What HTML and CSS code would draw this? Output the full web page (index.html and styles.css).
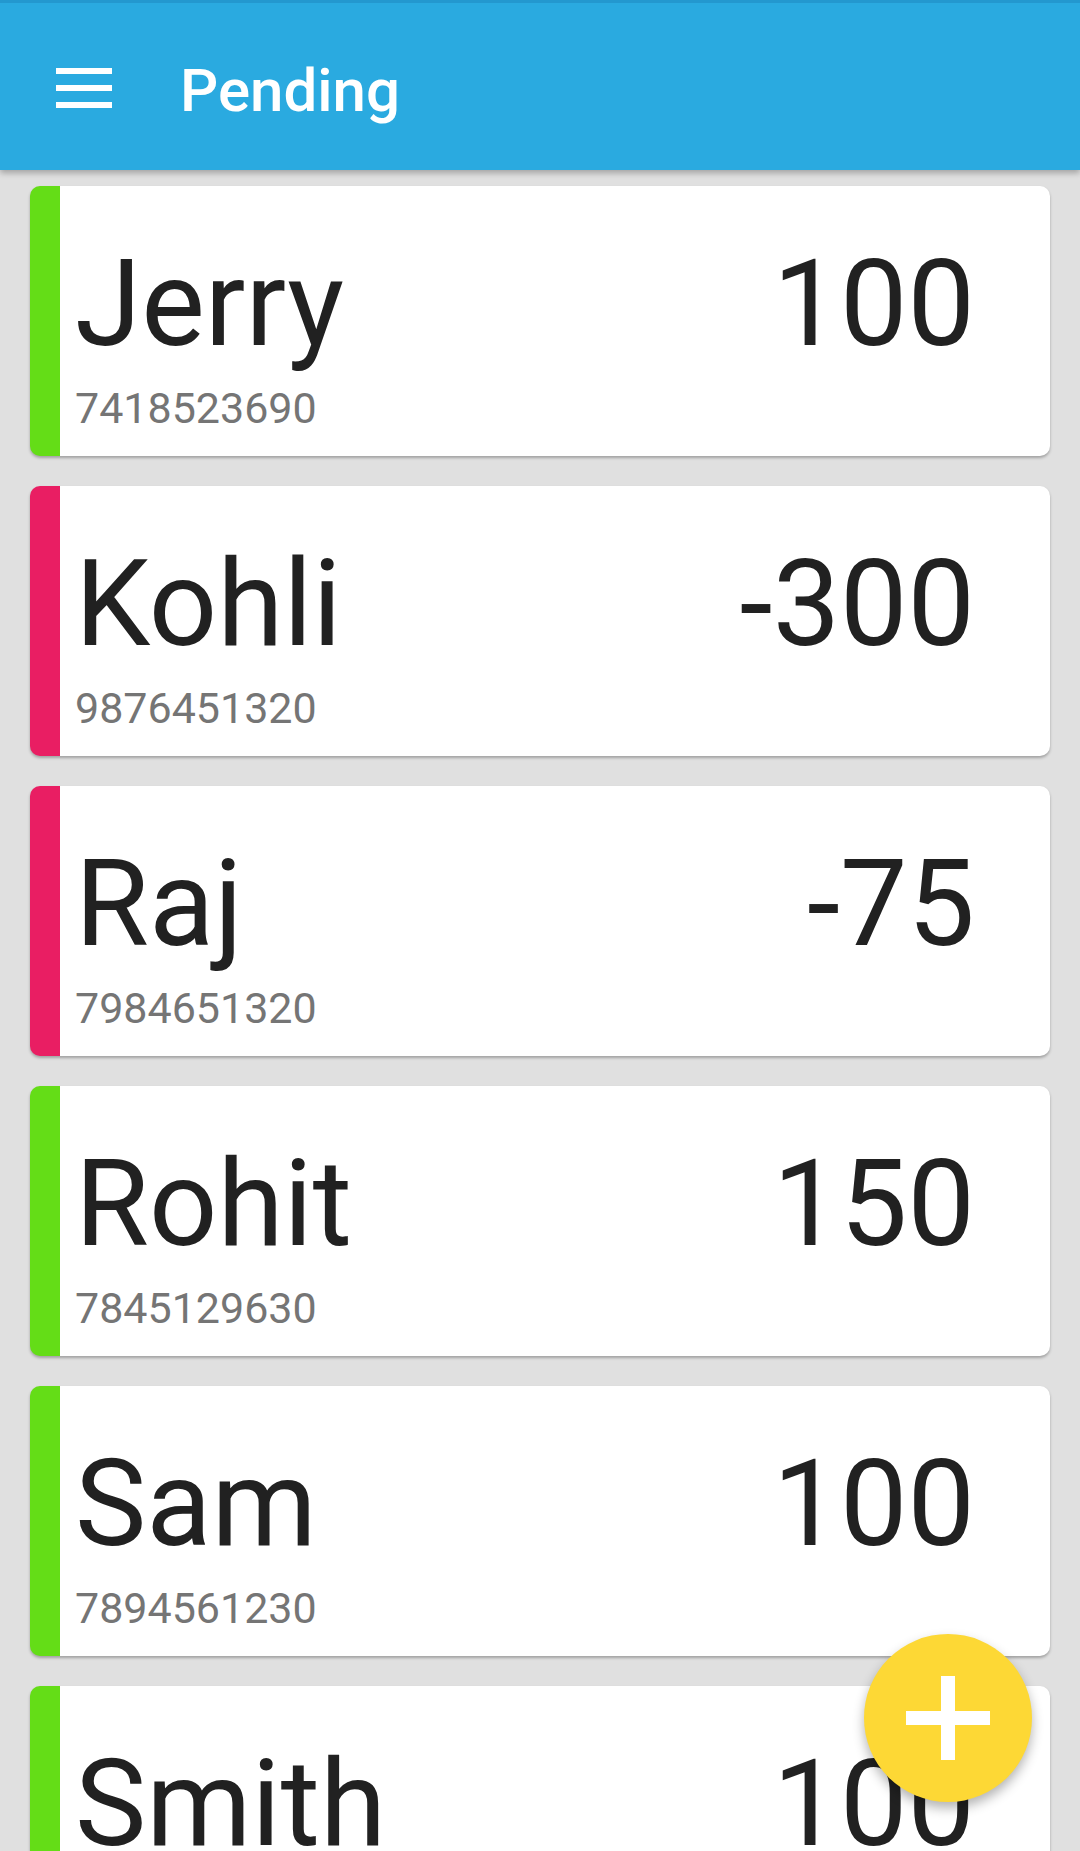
FILE: index.html
```html
<!DOCTYPE html>
<html lang="en">
<head>
<meta charset="utf-8">
<title>Pending</title>
<link rel="stylesheet" href="styles.css">
</head>
<body>
<div class="app">
  <header class="toolbar">
    <div class="menu-icon" aria-label="Menu">
      <span></span><span></span><span></span>
    </div>
    <h1 class="title">Pending</h1>
  </header>

  <main class="list">
    <div class="card card-pos">
      <div class="card-body">
        <div class="card-row">
          <span class="name">Jerry</span>
          <span class="amount">100</span>
        </div>
        <div class="phone">7418523690</div>
      </div>
    </div>
    <div class="card card-neg">
      <div class="card-body">
        <div class="card-row">
          <span class="name">Kohli</span>
          <span class="amount">-300</span>
        </div>
        <div class="phone">9876451320</div>
      </div>
    </div>
    <div class="card card-neg">
      <div class="card-body">
        <div class="card-row">
          <span class="name">Raj</span>
          <span class="amount">-75</span>
        </div>
        <div class="phone">7984651320</div>
      </div>
    </div>
    <div class="card card-pos">
      <div class="card-body">
        <div class="card-row">
          <span class="name">Rohit</span>
          <span class="amount">150</span>
        </div>
        <div class="phone">7845129630</div>
      </div>
    </div>
    <div class="card card-pos">
      <div class="card-body">
        <div class="card-row">
          <span class="name">Sam</span>
          <span class="amount">100</span>
        </div>
        <div class="phone">7894561230</div>
      </div>
    </div>
    <div class="card card-pos">
      <div class="card-body">
        <div class="card-row">
          <span class="name">Smith</span>
          <span class="amount">100</span>
        </div>
      </div>
    </div>
  </main>

  <button class="fab" aria-label="Add">
    <span class="plus-h"></span>
    <span class="plus-v"></span>
  </button>
</div>
</body>
</html>
```

FILE: styles.css
```css
* {
  box-sizing: border-box;
}

html, body {
  margin: 0;
  padding: 0;
}

body {
  width: 1080px;
  height: 1851px;
  overflow: hidden;
  background: #e0e0e0;
  font-family: Roboto, "Noto Sans", "Liberation Sans", sans-serif;
  color: #212121;
}

.app {
  position: relative;
  width: 1080px;
  height: 1851px;
  overflow: hidden;
}

.toolbar {
  position: relative;
  z-index: 2;
  height: 170px;
  background: #2aaae0;
  border-top: 3px solid #2398cf;
  display: flex;
  align-items: center;
  padding-left: 56px;
  box-shadow: 0 3px 6px rgba(0, 0, 0, 0.28);
}

.menu-icon {
  width: 56px;
  display: flex;
  flex-direction: column;
  gap: 11px;
  margin-top: 3px;
}

.menu-icon span {
  display: block;
  height: 6px;
  background: #ffffff;
}

.title {
  margin: 8px 0 0 68px;
  font-size: 60px;
  line-height: 60px;
  font-weight: 500;
  color: #ffffff;
}

.list {
  display: flex;
  flex-direction: column;
  gap: 30px;
  padding: 16px 30px 0 30px;
}

.card {
  flex: none;
  height: 270px;
  background: #ffffff;
  border-radius: 10px;
  border-left: 30px solid #64dd17;
  box-shadow: 0 2px 3px rgba(0, 0, 0, 0.28);
  display: flex;
}

.card-pos {
  border-left-color: #64dd17;
}

.card-neg {
  border-left-color: #e91e63;
}

.card-body {
  flex: 1;
  padding: 58px 75px 0 15px;
  display: flex;
  flex-direction: column;
}

.card-row {
  display: flex;
  justify-content: space-between;
  align-items: baseline;
}

.name,
.amount {
  font-size: 120px;
  line-height: 120px;
  font-weight: 400;
  color: #212121;
}

.phone {
  margin-top: 23px;
  font-size: 43px;
  line-height: 42px;
  color: #757575;
}

.fab {
  position: absolute;
  right: 48px;
  bottom: 49px;
  width: 168px;
  height: 168px;
  border: none;
  border-radius: 50%;
  background: #fdd835;
  box-shadow: 0 6px 12px rgba(0, 0, 0, 0.3);
  padding: 0;
  z-index: 3;
}

.plus-h {
  position: absolute;
  left: 42px;
  top: 77px;
  width: 84px;
  height: 14px;
  background: #ffffff;
}

.plus-v {
  position: absolute;
  left: 77px;
  top: 42px;
  width: 14px;
  height: 84px;
  background: #ffffff;
}
```
